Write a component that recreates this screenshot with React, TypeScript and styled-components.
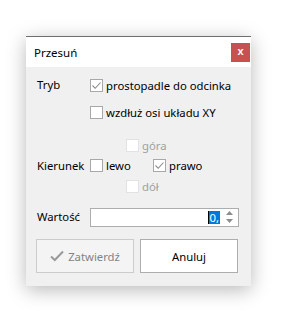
import React from 'react';
import styled, { createGlobalStyle } from 'styled-components';

const GlobalStyle = createGlobalStyle`
  html, body {
    margin: 0;
    padding: 0;
    background: #ffffff;
  }
  body {
    font-family: "Noto Sans", "DejaVu Sans", sans-serif;
    font-size: 11.3px;
    color: #000000;
  }
`;

const Page = styled.div`
  padding: 36px 0 0 26px;
  width: 282px;
  height: 319px;
  box-sizing: border-box;
`;

const Dialog = styled.div`
  width: 225px;
  height: 250px;
  box-sizing: border-box;
  border-top: 1px solid #6e6e6e;
  display: flex;
  flex-direction: column;
  box-shadow: 0 4px 18px rgba(0, 0, 0, 0.28);
`;

const TitleBar = styled.div`
  height: 30px;
  background: #ffffff;
  display: flex;
  align-items: center;
  justify-content: space-between;
  padding: 0 1px 0 8px;
  flex-shrink: 0;
`;

const Title = styled.span`
  font-size: 11.5px;
`;

const Close = styled.div`
  width: 19px;
  height: 19px;
  background: #c75050;
  color: #ffffff;
  font-family: "Liberation Sans", Arial, sans-serif;
  font-weight: bold;
  font-size: 11px;
  line-height: 17px;
  text-align: center;
`;

const Body = styled.div`
  flex: 1;
  background: #f0f0f0;
  padding: 8px 10px 0 10px;
  display: flex;
  flex-direction: column;
`;

const Section = styled.div<{ $gap?: number }>`
  display: grid;
  grid-template-columns: 54px 1fr;
  align-items: center;
  margin-bottom: ${(p) => p.$gap ?? 0}px;
`;

const Label = styled.div<{ $align?: string }>`
  padding-left: 1px;
  line-height: 20px;
  align-self: ${(p) => p.$align ?? 'center'};
`;

const Options = styled.div`
  display: flex;
  flex-direction: column;
  gap: 7px;
`;

const Cross = styled.div`
  display: grid;
  grid-template-columns: 36px 27px 1fr;
  grid-template-rows: 20px 21px 21px;
`;

const Option = styled.label<{ $col?: string; $row?: number; $disabled?: boolean }>`
  display: flex;
  align-items: center;
  height: 20px;
  gap: 3px;
  color: ${(p) => (p.$disabled ? '#a0a0a0' : '#000000')};
  grid-column: ${(p) => p.$col ?? 'auto'};
  grid-row: ${(p) => p.$row ?? 'auto'};
  white-space: nowrap;
`;

const Box = styled.span<{ $disabled?: boolean }>`
  width: 13px;
  height: 13px;
  box-sizing: border-box;
  background: #ffffff;
  border: 1px solid ${(p) => (p.$disabled ? '#e2e2e2' : '#a8a8a8')};
  display: flex;
  align-items: center;
  justify-content: center;
  flex-shrink: 0;
`;

const Input = styled.div`
  width: 149px;
  height: 19px;
  box-sizing: border-box;
  border: 1px solid #adadad;
  background: #ffffff;
  display: flex;
  align-items: center;
  justify-content: flex-end;
`;

const Selected = styled.span`
  background: #0078d7;
  color: #ffffff;
  height: 13px;
  line-height: 13px;
  padding: 0 1px;
  border-left: 1px solid #000;
`;

const Spin = styled.div`
  width: 17px;
  margin-left: 1px;
  height: 100%;
  display: flex;
  flex-direction: column;
  align-items: center;
  justify-content: center;
  gap: 4px;
`;

const Buttons = styled.div`
  display: flex;
  gap: 6px;
  margin-top: 12px;
`;

const Button = styled.div<{ $disabled?: boolean }>`
  width: 98px;
  height: 34px;
  box-sizing: border-box;
  border: 1px solid ${(p) => (p.$disabled ? '#cccccc' : '#adadad')};
  background: ${(p) => (p.$disabled ? '#f4f4f4' : '#ffffff')};
  color: ${(p) => (p.$disabled ? '#838383' : '#000000')};
  display: flex;
  align-items: center;
  justify-content: center;
  gap: 4px;
`;

const Check = () => (
  <svg width="11" height="11" viewBox="0 0 11 11">
    <path d="M1.5 5.5 L4.2 8.3 L9.5 2.5" fill="none" stroke="#8a8a8a" strokeWidth="1.1" />
  </svg>
);

const CheckBox = ({ checked, disabled }: { checked?: boolean; disabled?: boolean }) => (
  <Box $disabled={disabled}>{checked && <Check />}</Box>
);

export default function App() {
  return (
    <Page>
      <GlobalStyle />
      <Dialog>
        <TitleBar>
          <Title>Przesuń</Title>
          <Close>x</Close>
        </TitleBar>
        <Body>
          <Section $gap={13}>
            <Label $align="start">Tryb</Label>
            <Options>
              <Option>
                <CheckBox checked />
                prostopadle do odcinka
              </Option>
              <Option>
                <CheckBox />
                wzdłuż osi układu XY
              </Option>
            </Options>
          </Section>
          <Section $gap={10}>
            <Label>Kierunek</Label>
            <Cross>
              <Option $col="2 / span 2" $row={1} $disabled>
                <CheckBox disabled />
                góra
              </Option>
              <Option $col="1 / span 2" $row={2}>
                <CheckBox />
                lewo
              </Option>
              <Option $col="3" $row={2}>
                <CheckBox checked />
                prawo
              </Option>
              <Option $col="2 / span 2" $row={3} $disabled>
                <CheckBox disabled />
                dół
              </Option>
            </Cross>
          </Section>
          <Section>
            <Label>Wartość</Label>
            <Input>
              <Selected>0,</Selected>
              <Spin>
                <svg width="7" height="4" viewBox="0 0 7 4">
                  <path d="M0 4 L3.5 0 L7 4 Z" fill="#8c8c8c" />
                </svg>
                <svg width="7" height="4" viewBox="0 0 7 4">
                  <path d="M0 0 L3.5 4 L7 0 Z" fill="#8c8c8c" />
                </svg>
              </Spin>
            </Input>
          </Section>
          <Buttons>
            <Button $disabled>
              <svg width="14" height="12" viewBox="0 0 14 12">
                <path d="M1 6.5 L4.8 10 L13 1.5" fill="none" stroke="#9a9a9a" strokeWidth="2" />
              </svg>
              Zatwierdź
            </Button>
            <Button>Anuluj</Button>
          </Buttons>
        </Body>
      </Dialog>
    </Page>
  );
}
